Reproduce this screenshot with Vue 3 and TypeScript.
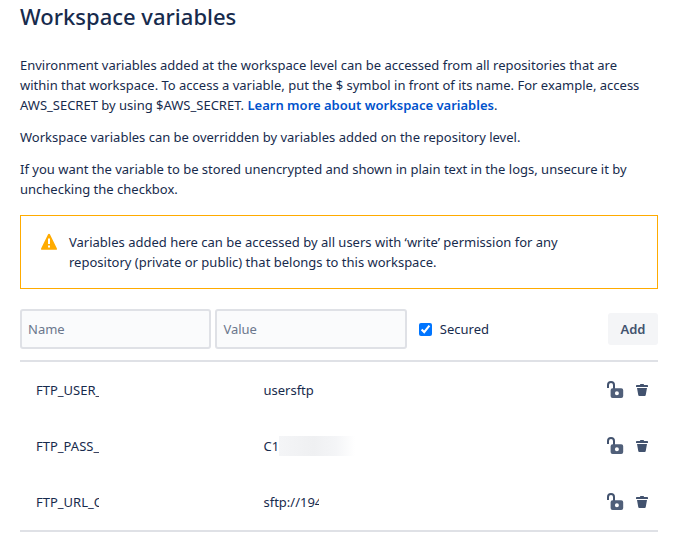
<script setup lang="ts">
import { ref } from 'vue'

interface Variable {
  name: string
  value: string
  redacted?: boolean
}

const name = ref('')
const value = ref('')
const secured = ref(true)

const variables = ref<Variable[]>([
  { name: 'FTP_USER_', value: 'usersftp' },
  { name: 'FTP_PASS_', value: 'C1', redacted: true },
  { name: 'FTP_URL_O', value: 'sftp://194' },
])

function addVariable() {
  if (!name.value) return
  variables.value.push({ name: name.value, value: value.value })
  name.value = ''
  value.value = ''
}

function removeVariable(index: number) {
  variables.value.splice(index, 1)
}
</script>

<template>
  <main class="page">
    <h1 class="title">Workspace variables</h1>

    <div class="intro">
      <p>
        Environment variables added at the workspace level can be accessed from all repositories that are
        within that workspace. To access a variable, put the $ symbol in front of its name. For example, access
        AWS_SECRET by using $AWS_SECRET. <a href="#learn-more">Learn more about workspace variables</a>.
      </p>
      <p>Workspace variables can be overridden by variables added on the repository level.</p>
      <p>
        If you want the variable to be stored unencrypted and shown in plain text in the logs, unsecure it by
        unchecking the checkbox.
      </p>
    </div>

    <section class="notice">
      <svg class="notice-icon" width="18" height="18" viewBox="0 0 18 18" aria-hidden="true">
        <path d="M8.1 1.2a1 1 0 0 1 1.8 0l7 14.2a.9.9 0 0 1-.8 1.3H1.9a.9.9 0 0 1-.8-1.3z" fill="#ffab00" />
        <path d="M8 5.500h2v5.500H8zM8 12.500h2v2H8z" fill="#fff" />
      </svg>
      <p>
        Variables added here can be accessed by all users with ‘write’ permission for any
        repository (private or public) that belongs to this workspace.
      </p>
    </section>

    <form class="add-form" @submit.prevent="addVariable">
      <input v-model="name" class="field" type="text" placeholder="Name" aria-label="Name" />
      <input v-model="value" class="field" type="text" placeholder="Value" aria-label="Value" />
      <label class="secured">
        <input v-model="secured" type="checkbox" />
        <span>Secured</span>
      </label>
      <button class="add" type="submit">Add</button>
    </form>

    <table class="variables">
      <tbody>
        <tr v-for="(item, index) in variables" :key="item.name">
          <td class="name-cell"><span class="clip name-text">{{ item.name }}</span></td>
          <td class="value-cell">
            <span v-if="item.redacted" class="redacted">{{ item.value }}<span class="smudge"></span></span>
            <span v-else class="clip value-text">{{ item.value }}</span>
          </td>
          <td class="action-cell">
            <div class="actions">
              <button type="button" class="icon-button" aria-label="Unsecured">
                <svg width="18" height="20" viewBox="0 0 18 20" aria-hidden="true">
                  <path d="M2 8V5a3 3 0 0 1 6 0V9" fill="none" stroke="#42526e" stroke-width="2" />
                  <path
                    fill-rule="evenodd"
                    d="M6.600 8.200h8.600a2 2 0 0 1 2 2V16a2 2 0 0 1-2 2H6.600a2 2 0 0 1-2-2v-5.800a2 2 0 0 1 2-2zM10.900 11.200a2 2 0 1 0 0 4 2 2 0 0 0 0-4z"
                    fill="#505f79"
                  />
                </svg>
              </button>
              <button type="button" class="icon-button" aria-label="Delete" @click="removeVariable(index)">
                <svg width="12" height="12" viewBox="0 0 12 12" aria-hidden="true">
                  <path
                    d="M4 1V.7C4 .3 4.3 0 4.7 0h2.600c.4 0 .7.3.7.7V1h3.300c.4 0 .7.3.7.7V3H0V1.700C0 1.300.3 1 .7 1zM1 4h10l-1.300 7.200c-.1.500-.5.800-1 .8H3.300c-.5 0-.9-.3-1-.8z"
                    fill="#42526e"
                  />
                </svg>
              </button>
            </div>
          </td>
        </tr>
      </tbody>
    </table>
  </main>
</template>

<style>
body {
  margin: 0;
  background: #fff;
}
</style>

<style scoped>
.page {
  box-sizing: border-box;
  padding: 2px 23px 12px 20px;
  font-family: 'Segoe UI', 'Noto Sans', sans-serif;
  font-size: 13px;
  line-height: 20px;
  color: #172b4d;
}

.title {
  margin: 0 0 25px;
  font-size: 22px;
  line-height: 28px;
  font-weight: 500;
}

.intro {
  display: flex;
  flex-direction: column;
  gap: 12px;
}

p {
  margin: 0;
}

a {
  color: #0052cc;
  font-weight: 600;
  text-decoration: none;
}

.notice {
  display: flex;
  align-items: flex-start;
  gap: 11px;
  margin-top: 16px;
  padding: 16px 80px 16px 19px;
  border: 1px solid #ffab00;
}

.notice-icon {
  flex: none;
  margin-top: 1px;
}

.add-form {
  display: flex;
  align-items: center;
  gap: 4px;
  margin-top: 20px;
}

.field {
  box-sizing: border-box;
  flex: 0 1 30%;
  min-width: 0;
  height: 40px;
  padding: 0 6px;
  border: 2px solid #dfe1e6;
  border-radius: 3px;
  background: #fafbfc;
  color: #172b4d;
  font: inherit;
}

.field::placeholder {
  color: #6b778c;
  opacity: 1;
}

.secured {
  display: flex;
  align-items: center;
  gap: 8px;
  margin-left: 8px;
}

.secured input {
  width: 13px;
  height: 13px;
  margin: 0;
}

.add {
  min-width: 50px;
  height: 32px;
  margin-left: auto;
  padding: 0 12px;
  border: 0;
  border-radius: 3px;
  background: #f4f5f7;
  color: #42526e;
  font: inherit;
  font-weight: 600;
}

.variables {
  width: 100%;
  margin-top: 11px;
  border-collapse: separate;
  border-spacing: 0;
  table-layout: fixed;
  border-top: 2px solid #dfe1e6;
  border-bottom: 2px solid #dfe1e6;
}

td {
  height: 56px;
  padding: 0;
  vertical-align: middle;
}

.name-cell {
  width: 38%;
  padding-left: 16px;
  box-sizing: border-box;
}

.value-cell {
  padding-left: 1px;
}

.action-cell {
  width: 80px;
}

.clip {
  display: block;
  overflow: hidden;
  white-space: nowrap;
}

.name-text {
  width: 63px;
}

.value-text {
  width: 56px;
}

.redacted {
  display: flex;
}

.smudge {
  width: 76px;
  height: 20px;
  background: linear-gradient(90deg, #f4f5f7, #eff0f2 45%, #f4f5f7 75%, #fff);
}

.actions {
  display: flex;
  align-items: center;
  justify-content: flex-end;
  gap: 12px;
  padding-right: 10px;
}

.icon-button {
  display: flex;
  padding: 0;
  border: 0;
  background: none;
}
</style>
